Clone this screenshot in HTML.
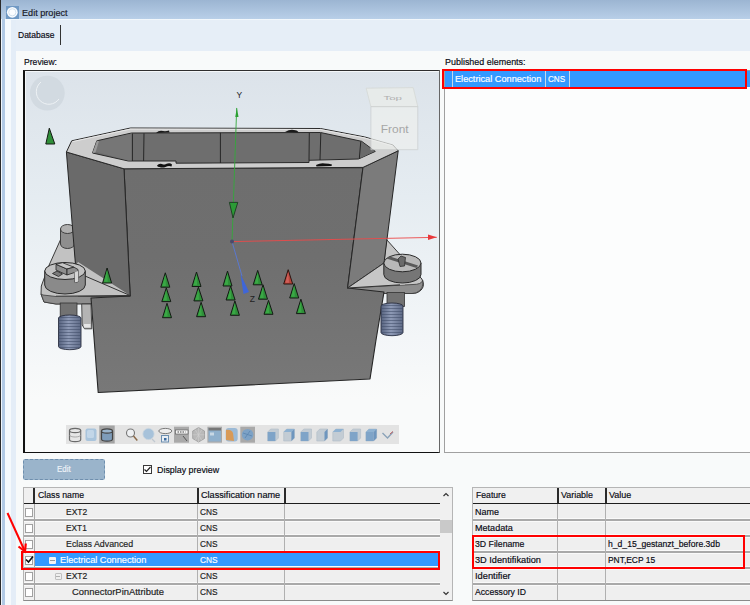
<!DOCTYPE html>
<html><head><meta charset="utf-8">
<style>
*{margin:0;padding:0;box-sizing:border-box}
html,body{width:750px;height:605px;overflow:hidden;background:#f8fafa;font-family:"Liberation Sans",sans-serif;font-size:9.2px;color:#1e1e1e;position:relative}
.a{position:absolute}
.t{position:absolute;white-space:nowrap;line-height:12px;transform-origin:0 0;-webkit-text-stroke:0.18px currentColor}
</style></head><body>
<div class="a" style="left:0px;top:0px;width:750px;height:19px;background:linear-gradient(#9cb5d2,#b8cfe8);"></div>
<div class="a" style="left:0px;top:19px;width:750px;height:1px;background:#f2f7fb;"></div>
<div class="a" style="left:0px;top:20px;width:750px;height:31px;background:#e6eef7;"></div>
<div class="a" style="left:0px;top:51px;width:750px;height:554px;background:#f8fafa;"></div>
<div class="a" style="left:0px;top:0px;width:1px;height:605px;background:#2a2a2a;"></div>
<div class="a" style="left:1px;top:19px;width:1px;height:586px;background:#eef4fa;"></div>
<div class="a" style="left:2px;top:19px;width:3px;height:586px;background:#b1c9e4;"></div>
<div class="a" style="left:5px;top:19px;width:6px;height:586px;background:#f5f9fc;"></div>
<div class="a" style="left:11px;top:20px;width:5px;height:585px;background:#e4edf7;"></div>
<div class="a" style="left:6px;top:6px;width:12.5px;height:12.5px;background:#7099c4"></div>
<svg class="a" style="left:6px;top:6px" width="13" height="13"><circle cx="6.3" cy="6.3" r="5.4" fill="#fbfdff"/><circle cx="6.3" cy="6.3" r="3.6" fill="none" stroke="#cfdfec" stroke-width="0.9"/></svg>
<div class="t" style="left:22px;top:6.97px;font-size:9.6px;color:#1a1a28;transform:scaleX(0.9496);">Edit project</div>
<div class="t" style="left:17.5px;top:28.97px;font-size:9.6px;color:#0a0a14;transform:scaleX(0.8858);">Database</div>
<div class="a" style="left:60px;top:25px;width:1px;height:20px;background:#333;"></div>
<div class="t" style="left:23.5px;top:55.67px;font-size:9.6px;color:#0a0a14;transform:scaleX(0.8965);">Preview:</div>
<div class="t" style="left:444.7px;top:55.67px;font-size:9.6px;color:#0a0a14;transform:scaleX(0.9324);">Published elements:</div>
<div class="a" style="left:23px;top:70px;width:417px;height:383px;border-top:1px solid #2e2e2e;border-left:2px solid #111;border-right:2px solid #666;border-bottom:1px solid #111;background:#fff;box-shadow:inset -1px 0 0 #333"></div>
<svg class="a" style="left:0;top:0" width="750" height="605" viewBox="0 0 750 605">
<defs><clipPath id="pc"><rect x="25" y="71" width="414" height="381"/></clipPath><linearGradient id="bg" x1="0" y1="0" x2="0" y2="1"><stop offset="0" stop-color="#dce3ea"/><stop offset="0.33" stop-color="#e5ecf1"/><stop offset="0.7" stop-color="#f3f6f8"/><stop offset="0.86" stop-color="#f9fafa"/><stop offset="1" stop-color="#f9fafa"/></linearGradient><linearGradient id="thr" x1="0" y1="0" x2="1" y2="0"><stop offset="0" stop-color="#56627e"/><stop offset="0.45" stop-color="#8e9ab6"/><stop offset="1" stop-color="#5e6a86"/></linearGradient><pattern id="th" width="4" height="3" patternUnits="userSpaceOnUse"><rect width="4" height="3" fill="none"/><rect y="2" width="4" height="1" fill="#3e4a66" opacity="0.55"/></pattern><linearGradient id="ff" x1="0" y1="0" x2="0" y2="1"><stop offset="0" stop-color="#6e6e6e"/><stop offset="0.4" stop-color="#6f6f6f"/><stop offset="1" stop-color="#787878"/></linearGradient></defs>
<g clip-path="url(#pc)">
<rect x="25" y="71" width="414" height="381" fill="url(#bg)"/><rect x="25" y="71" width="414" height="1" fill="#f4f7f9"/><rect x="25" y="71" width="1" height="381" fill="#f4f7f9"/>
<circle cx="47.3" cy="93.1" r="17.4" fill="#d2dae1"/>
<path d="M 41 82 A 12.5 12.5 0 1 0 59 99" stroke="#eef2f5" stroke-width="1" fill="none"/>
<polygon points="49.3,128.2 45.8,144 54.8,144" fill="#2f8f39" stroke="#141a14" stroke-width="1" stroke-linejoin="round" />
<polygon points="366.2,88.2 413.2,87.6 417.8,106.7 370.9,106.7" fill="#e9ecea" stroke="#d4d8d4" stroke-width="0.8" stroke-linejoin="round" opacity="0.9"/>
<text x="392.7" y="100" font-family="Liberation Sans" font-size="8" fill="#b0b0b0" text-anchor="middle" textLength="18.6" lengthAdjust="spacingAndGlyphs" transform="translate(392.7 99.5) scale(1 0.6) translate(-392.7 -99.5)">Top</text>
<polygon points="60.7,239.3 74,236 78,296 130.2,295.5 131,303.5 56,304 44,302 41,294 41.3,286 48.7,266" fill="#c2c2c2" stroke="#3a3a3a" stroke-width="1" stroke-linejoin="round" />
<polygon points="56,296.5 130.2,295.5 131,303.5 56,304 44,302 41,294 43,295" fill="#8e8e8e" stroke="#3a3a3a" stroke-width="0.8" stroke-linejoin="round" />
<path d="M60.5 229 L60.5 244 A7 4.5 0 0 0 74.5 244 L74.5 229 Z" fill="#8e8e8e" stroke="#333" stroke-width="0.9"/>
<ellipse cx="67.5" cy="229" rx="7" ry="4.5" fill="#b0b0b0" stroke="#333" stroke-width="0.9"/>
<path d="M386.5 239.5 L384 263 L347.6 288 L349 293.5 L412 293.5 A11 9 0 0 0 423 282 L421.9 279 Z" fill="#c6c6c6" stroke="#3a3a3a" stroke-width="1"/>
<path d="M347.6 288 L413 284.5 A10 5 0 0 0 422.8 280.5 L422.8 284 A11 9.5 0 0 1 412 293.5 L349 293.5 Z" fill="#8e8e8e" stroke="#3a3a3a" stroke-width="0.8"/>
<polygon points="124,168.8 363,167.4 347.6,288 384,292 376,340 370,379 98.2,392.5 91,298 130.2,296" fill="url(#ff)" stroke="#262626" stroke-width="1.1" stroke-linejoin="round" />
<polygon points="66.4,152 124,168.8 130.2,296 78,296" fill="#6a6a6a" stroke="#262626" stroke-width="1" stroke-linejoin="round" />
<polygon points="363,167.4 398.2,150.8 384,263 347.6,288" fill="#7b7b7b" stroke="#262626" stroke-width="1" stroke-linejoin="round" />
<polygon points="78,262 130.2,295.5 56,296.5" fill="#c2c2c2" />
<line x1="85" y1="276" x2="130.2" y2="295.5" stroke="#333" stroke-width="1" />
<line x1="56" y1="296.2" x2="130.2" y2="295.5" stroke="#333" stroke-width="1" />
<polygon points="384,263 347.6,288 405,284.5 405,262" fill="#c6c6c6" />
<line x1="384" y1="263" x2="347.6" y2="288" stroke="#333" stroke-width="1" />
<line x1="347.6" y1="288" x2="400" y2="284.8" stroke="#333" stroke-width="1" />
<polygon points="66.4,152 71.7,140.8 130.4,128 320.5,128.5 364.5,136.9 393,145 398.2,150.8 363,167.4 124,168.8" fill="#cdcdcd" stroke="#2a2a2a" stroke-width="1" stroke-linejoin="round" />
<polyline points="72.5,141.6 130.6,129 320.3,129.5 364.2,137.8 392.5,145.8" fill="none" stroke="#ececec" stroke-width="0.9"/>
<polygon points="92.5,153 96.8,140.8 131.5,133 320.5,132.5 361.6,141.3 375.3,151.4 358.5,159 309,160.3 309,162.5 176,163.2 176,161 128.3,161" fill="#6e6e6e" stroke="#2a2a2a" stroke-width="1" stroke-linejoin="round" />
<polygon points="95.5,151.5 97.8,141.5 131.8,133.6 131.8,160.6 128.3,160.5" fill="#767676" />
<polygon points="361.6,142 374.5,151.3 360.5,158" fill="#6a6a6a" />
<polygon points="92.5,153 96.8,140.8 99,141 95.5,152.6" fill="#9a9a9a" />
<line x1="132.4" y1="133.5" x2="132.4" y2="161" stroke="#262626" stroke-width="1" />
<line x1="144" y1="133.3" x2="143.6" y2="161" stroke="#262626" stroke-width="1" />
<line x1="220.4" y1="132.8" x2="220.4" y2="163" stroke="#262626" stroke-width="1" />
<line x1="309.3" y1="133" x2="309" y2="160.3" stroke="#262626" stroke-width="1" />
<line x1="320.8" y1="133" x2="320" y2="160" stroke="#262626" stroke-width="1" />
<line x1="360.8" y1="141.5" x2="359.3" y2="158.6" stroke="#262626" stroke-width="1" />
<path d="M157 165.5 q2 -2.5 5 -1.5 q2 1 4 0 q4 -1.5 6 0.5 l-0.5 2 q-3 -1 -6 0.5 q-3 1 -6 0 q-2 0 -2.5 -1.5z" fill="#111"/>
<path d="M316 165 q5 -2.5 9 -1.5 q4 0 7 1 l-0.5 1.5 l-15 0.5 z" fill="#111"/>
<path d="M156 133 q3 -3 7 -2 q3 0.5 6 -0.5 l0.5 2 z" fill="#1a1a1a"/>
<path d="M285 132 q5 -3 9 -2 q3 0 4 1.5 l0.5 1 z" fill="#1a1a1a"/>
<path d="M44.7 271 L44.7 285 A20.3 9 0 0 0 85.3 285 L85.3 271 Z" fill="#8a8a8a" stroke="#2a2a2a" stroke-width="1"/>
<ellipse cx="65" cy="271" rx="20.3" ry="8.5" fill="#c2c2c2" stroke="#2a2a2a" stroke-width="1"/>
<polygon points="52.5,273.5 57,271 62.5,274 58.5,276.5" fill="#7a7a7a" stroke="#222" stroke-width="0.8" stroke-linejoin="round" />
<polygon points="56,264.3 56,270 67,275 67,269" fill="#8e8e8e" stroke="#222" stroke-width="0.8" stroke-linejoin="round" />
<polygon points="56,264.3 62.5,262.7 74,267.2 67,269" fill="#c6c6c6" stroke="#222" stroke-width="0.8" stroke-linejoin="round" />
<polygon points="67,269 74,267.2 78,269.5 78.5,281.5 75,282.5 74.5,272.5 67,275" fill="#8e8e8e" stroke="#222" stroke-width="0.8" stroke-linejoin="round" />
<polygon points="74.5,272.5 78,271 78.5,281.5 75,282.5" fill="#d6d6d6" />
<rect x="60.2" y="303" width="16.8" height="15" fill="#727272" stroke="#333" stroke-width="0.8"/>
<path d="M58.5 318 a11.25 3 0 0 1 22.5 0 v28.5 a11.25 3.2 0 0 1 -22.5 0 z" fill="url(#thr)" stroke="#2a2f40" stroke-width="0.9"/>
<path d="M58.5 318 a11.25 3 0 0 1 22.5 0 v28.5 a11.25 3.2 0 0 1 -22.5 0 z" fill="url(#th)"/>
<path d="M81.7 304 L91 304 L91.8 328.8 L84.5 328.8 L82.2 325 Z" fill="#b4b4b4" stroke="#3a3a3a" stroke-width="0.9"/>
<rect x="84" y="324" width="6.5" height="3.5" fill="#e6e6e6"/>
<path d="M383.8 263 L383.8 274.5 A18.6 8.5 0 0 0 421 274.5 L421 263 Z" fill="#767676" stroke="#2a2a2a" stroke-width="1"/>
<ellipse cx="402.4" cy="263" rx="18.6" ry="8.8" fill="#b9b9b9" stroke="#2a2a2a" stroke-width="1"/>
<polygon points="386.5,258.5 390,256.5 418,265.5 416.5,268" fill="#5a5a5a" />
<polygon points="398,259 401,256 405.5,257.5 404.5,266 400,266.5" fill="#6a6a6a" stroke="#222" stroke-width="0.7" stroke-linejoin="round" />
<rect x="387" y="292.5" width="17.5" height="14" fill="#727272" stroke="#333" stroke-width="0.8"/>
<path d="M381 306 a11 3 0 0 1 22 0 v26.5 a11 3.2 0 0 1 -22 0 z" fill="url(#thr)" stroke="#2a2f40" stroke-width="0.9"/>
<path d="M381 306 a11 3 0 0 1 22 0 v26.5 a11 3.2 0 0 1 -22 0 z" fill="url(#th)"/>
<polygon points="107.1,268 102.6,283 111.6,283" fill="#2f8f39" stroke="#141a14" stroke-width="1" stroke-linejoin="round" />
<polygon points="107.1,270 104.1,281.8 107.7,281.8" fill="#3aa845" />
<polygon points="165.29999999999998,272.8 160.79999999999998,287.2 169.79999999999998,287.2" fill="#2f8f39" stroke="#141a14" stroke-width="1" stroke-linejoin="round" />
<polygon points="165.29999999999998,274.8 162.29999999999998,286.0 165.89999999999998,286.0" fill="#3aa845" />
<polygon points="166.29999999999998,287.9 161.79999999999998,301.6 170.79999999999998,301.6" fill="#2f8f39" stroke="#141a14" stroke-width="1" stroke-linejoin="round" />
<polygon points="166.29999999999998,289.9 163.29999999999998,300.40000000000003 166.89999999999998,300.40000000000003" fill="#3aa845" />
<polygon points="167.0,303.3 162.5,317.7 171.5,317.7" fill="#2f8f39" stroke="#141a14" stroke-width="1" stroke-linejoin="round" />
<polygon points="167.0,305.3 164.0,316.5 167.6,316.5" fill="#3aa845" />
<polygon points="196.5,272 192.0,286.5 201.0,286.5" fill="#2f8f39" stroke="#141a14" stroke-width="1" stroke-linejoin="round" />
<polygon points="196.5,274 193.5,285.3 197.1,285.3" fill="#3aa845" />
<polygon points="198.4,287.2 193.9,300.9 202.9,300.9" fill="#2f8f39" stroke="#141a14" stroke-width="1" stroke-linejoin="round" />
<polygon points="198.4,289.2 195.4,299.7 199.0,299.7" fill="#3aa845" />
<polygon points="201.1,302.3 196.6,316.7 205.6,316.7" fill="#2f8f39" stroke="#141a14" stroke-width="1" stroke-linejoin="round" />
<polygon points="201.1,304.3 198.1,315.5 201.7,315.5" fill="#3aa845" />
<polygon points="227.5,271.1 223.0,286 232.0,286" fill="#2f8f39" stroke="#141a14" stroke-width="1" stroke-linejoin="round" />
<polygon points="227.5,273.1 224.5,284.8 228.1,284.8" fill="#3aa845" />
<polygon points="230.6,286 226.1,300 235.1,300" fill="#2f8f39" stroke="#141a14" stroke-width="1" stroke-linejoin="round" />
<polygon points="230.6,288 227.6,298.8 231.2,298.8" fill="#3aa845" />
<polygon points="234.9,300.9 230.4,315.3 239.4,315.3" fill="#2f8f39" stroke="#141a14" stroke-width="1" stroke-linejoin="round" />
<polygon points="234.9,302.9 231.9,314.1 235.5,314.1" fill="#3aa845" />
<polygon points="257.70000000000005,270.4 253.20000000000002,284.8 262.20000000000005,284.8" fill="#2f8f39" stroke="#141a14" stroke-width="1" stroke-linejoin="round" />
<polygon points="257.70000000000005,272.4 254.70000000000002,283.6 258.3,283.6" fill="#3aa845" />
<polygon points="263.0,284.8 258.5,299.2 267.5,299.2" fill="#2f8f39" stroke="#141a14" stroke-width="1" stroke-linejoin="round" />
<polygon points="263.0,286.8 260.0,298.0 263.59999999999997,298.0" fill="#3aa845" />
<polygon points="268.5,300.4 264.0,314.3 273.0,314.3" fill="#2f8f39" stroke="#141a14" stroke-width="1" stroke-linejoin="round" />
<polygon points="268.5,302.4 265.5,313.1 269.09999999999997,313.1" fill="#3aa845" />
<polygon points="294.20000000000005,283.6 289.70000000000005,298 298.70000000000005,298" fill="#2f8f39" stroke="#141a14" stroke-width="1" stroke-linejoin="round" />
<polygon points="294.20000000000005,285.6 291.20000000000005,296.8 294.8,296.8" fill="#3aa845" />
<polygon points="300.90000000000003,299.2 296.40000000000003,313.6 305.40000000000003,313.6" fill="#2f8f39" stroke="#141a14" stroke-width="1" stroke-linejoin="round" />
<polygon points="300.90000000000003,301.2 297.90000000000003,312.40000000000003 301.5,312.40000000000003" fill="#3aa845" />
<polygon points="288.2,269.7 283.7,284 292.7,284" fill="#b8443a" stroke="#2a1410" stroke-width="1" stroke-linejoin="round" />
<polygon points="288.2,272 285.5,282.8 289,282.8" fill="#d0605a" />
<line x1="232" y1="241.6" x2="436.8" y2="237.3" stroke="#ec4a4a" stroke-width="0.9" />
<polygon points="436.8,237.3 428,234.5 428,240" fill="#e8383b" />
<line x1="232" y1="241.6" x2="236.7" y2="108" stroke="#33a83b" stroke-width="0.9" />
<polygon points="236.9,107.5 235.3,117 238.5,117" fill="#2aa032" />
<polygon points="229.4,202.4 237.8,202.4 233,218" fill="#2c9a36" stroke="#1b3a20" stroke-width="0.9" stroke-linejoin="round" />
<line x1="232" y1="241.6" x2="242" y2="276" stroke="#5a78d0" stroke-width="1" />
<polygon points="240.5,274 243.5,294 249,292" fill="#3f66d8" />
<circle cx="232" cy="241.6" r="2" fill="#4a4a6a"/>
<text x="236.5" y="97.5" font-family="Liberation Sans" font-size="8.5" fill="#222">Y</text>
<text x="249.8" y="301.5" font-family="Liberation Sans" font-size="8.5" fill="#222">Z</text>
<polygon points="370.9,106.7 417.8,106.7 417.8,149.7 370.9,149.7" fill="#eef0ee" stroke="#c8cccc" stroke-width="0.9" stroke-linejoin="round" opacity="0.72"/>
<text x="380.8" y="133.4" font-family="Liberation Sans" font-size="10.4" fill="#a6a6a6" textLength="27.8" lengthAdjust="spacingAndGlyphs">Front</text>
<rect x="66" y="425" width="333" height="19" fill="#e3e3e3"/>
<path d="M69.5 430.5 v9 a5.6 2.2 0 0 0 11.2 0 v-9" fill="#e6e6e6" stroke="#6a6a6a" stroke-width="1.2"/>
<ellipse cx="75.1" cy="430.5" rx="5.6" ry="2.2" fill="#e6e6e6" stroke="#6a6a6a" stroke-width="1.2"/>
<path d="M69.5 435 a5.6 2 0 0 0 11.2 0" fill="none" stroke="#9a9a9a" stroke-width="0.8"/>
<rect x="85.5" y="428.5" width="11" height="12.5" rx="2" fill="#a9c4dc"/>
<rect x="87" y="430" width="7" height="8" rx="1.5" fill="#c2d6e8"/>
<rect x="99.3" y="425.5" width="15.400000000000006" height="18.0" fill="#a3a3a3"/>
<path d="M101.5 431 v8 a5.5 2.2 0 0 0 11 0 v-8" fill="#7e9cba" stroke="#444" stroke-width="1.2"/>
<ellipse cx="107" cy="431" rx="5.5" ry="2.2" fill="#9ab4cc" stroke="#444" stroke-width="1.2"/>
<circle cx="130.5" cy="433" r="4" fill="#eef0f2" stroke="#777" stroke-width="1.1"/>
<line x1="133.5" y1="436" x2="137.3" y2="440.5" stroke="#8a6a4a" stroke-width="1.5"/>
<circle cx="148.5" cy="434" r="5.6" fill="#a7c2da" stroke="#c8d4de" stroke-width="0.8"/>
<path d="M152 439 l3 3" stroke="#c0c8d0" stroke-width="1.2"/>
<ellipse cx="165.3" cy="431" rx="6.5" ry="2.6" fill="#eeeeee" stroke="#7a7a7a" stroke-width="1"/>
<rect x="161.5" y="435.5" width="7" height="6.5" fill="#e8eef4" stroke="#6d8fb0" stroke-width="1"/>
<rect x="164" y="438" width="2.5" height="2.5" fill="#3a6aa0"/>
<rect x="174" y="426.7" width="15" height="16.0" fill="#a9a9a9"/>
<rect x="175.5" y="430" width="12.5" height="4" fill="#f4f4f4" stroke="#555" stroke-width="0.6"/>
<path d="M177.5 432 h8" stroke="#444" stroke-width="1.2" stroke-dasharray="1.5 1"/>
<line x1="183" y1="436" x2="187" y2="441" stroke="#555" stroke-width="1"/>
<polygon points="198.6,427.5 204.5,431 204.5,438.5 198.6,442 192.7,438.5 192.7,431" fill="#b9b9b9" stroke="#9a9a9a" stroke-width="0.8"/>
<path d="M192.7 434.8 h11.8 M198.6 427.5 v14.5 M195 429.5 l7 11 M202 429.5 l-7 11" stroke="#d4d4d4" stroke-width="0.5"/>
<rect x="207.4" y="426.7" width="14.599999999999994" height="16.0" fill="#a9a9a9"/>
<rect x="208.5" y="428" width="12.5" height="13.5" fill="#8fb0cc"/>
<rect x="208.5" y="428" width="12.5" height="2.5" fill="#777"/>
<rect x="210" y="432.5" width="4" height="3" fill="#c8d8e4"/>
<rect x="225.7" y="428" width="12" height="13.5" rx="3" fill="#9cbad6"/>
<path d="M226 430 q5 -1 7 3 l1 8 l-8 -1 z" fill="#d89a58"/>
<rect x="240.3" y="426.7" width="14.699999999999989" height="16.0" fill="#a9a9a9"/>
<circle cx="247.6" cy="434.7" r="5.8" fill="#7da2c6"/>
<path d="M243 433 l9 3 M245 438 l5 -7" stroke="#5a84ae" stroke-width="0.8"/>
<polygon points="270.7,429 278.4,429 278.4,438 275.4,441 267.7,441 267.7,432" fill="#c3ccd4" stroke="#b0bcc8" stroke-width="0.6"/>
<polygon points="267.7,432 275.4,432 275.4,441 267.7,441" fill="#7fa4c8"/>
<polygon points="286.7,429 294.4,429 294.4,438 291.4,441 283.7,441 283.7,432" fill="#c3ccd4" stroke="#b0bcc8" stroke-width="0.6"/>
<polygon points="286.7,429 294.4,429 291.4,432 283.7,432" fill="#8fb2d2"/>
<polygon points="291.4,432 294.4,429 294.4,438 291.4,441" fill="#6f96be"/>
<polygon points="303.8,429 311.5,429 311.5,438 308.5,441 300.8,441 300.8,432" fill="#c3ccd4" stroke="#b0bcc8" stroke-width="0.6"/>
<polygon points="300.8,432 308.5,432 308.5,441 300.8,441" fill="#7fa4c8"/>
<polygon points="319.8,429 327.5,429 327.5,438 324.5,441 316.8,441 316.8,432" fill="#c3ccd4" stroke="#b0bcc8" stroke-width="0.6"/>
<polygon points="324.5,432 327.5,429 327.5,438 324.5,441" fill="#6f96be"/>
<polygon points="335.8,429 343.5,429 343.5,438 340.5,441 332.8,441 332.8,432" fill="#c3ccd4" stroke="#b0bcc8" stroke-width="0.6"/>
<polygon points="335.8,429 343.5,429 340.5,432 332.8,432" fill="#8fb2d2"/>
<polygon points="352.9,429 360.59999999999997,429 360.59999999999997,438 357.59999999999997,441 349.9,441 349.9,432" fill="#c3ccd4" stroke="#b0bcc8" stroke-width="0.6"/>
<polygon points="349.9,432 357.59999999999997,432 357.59999999999997,441 349.9,441" fill="#7fa4c8"/>
<polygon points="368.9,429 376.59999999999997,429 376.59999999999997,438 373.59999999999997,441 365.9,441 365.9,432" fill="#c3ccd4" stroke="#b0bcc8" stroke-width="0.6"/>
<polygon points="365.9,432 373.59999999999997,432 373.59999999999997,441 365.9,441" fill="#7fa4c8"/>
<polygon points="368.9,429 376.59999999999997,429 373.59999999999997,432 365.9,432" fill="#8fb2d2"/>
<polygon points="373.59999999999997,432 376.59999999999997,429 376.59999999999997,438 373.59999999999997,441" fill="#6f96be"/>
<path d="M382.5 433 l5 5 l5.5 -6" fill="none" stroke="#8aa2b8" stroke-width="1.4"/>
<path d="M390 434 l3 -2.5" stroke="#c06060" stroke-width="1"/>
</g></svg>
<div class="a" style="left:444px;top:70px;width:306px;height:383px;border-left:1px solid #a0a0a0;border-top:1px solid #a0a0a0;border-bottom:1px solid #a0a0a0;background:#fcfdfd"></div>
<div class="a" style="left:445px;top:71px;width:305px;height:16px;background:#3399ff;"></div>
<div class="a" style="left:452px;top:71px;width:1px;height:16px;background:#c4d8ec;"></div>
<div class="a" style="left:545px;top:71px;width:1px;height:16px;background:#c4d8ec;"></div>
<div class="a" style="left:569px;top:71px;width:1px;height:16px;background:#c4d8ec;"></div>
<div class="t" style="left:455px;top:72.67px;font-size:9.6px;color:#fff;transform:scaleX(0.9570);">Electrical Connection</div>
<div class="t" style="left:547.7px;top:72.67px;font-size:9.6px;color:#fff;transform:scaleX(0.8436);">CNS</div>
<div class="a" style="left:442px;top:69px;width:305px;height:20px;border:2px solid #f00"></div>
<div class="a" style="left:23px;top:459px;width:82px;height:21px;background:#9ab4cb;border:1px dashed #6f8fae;border-radius:2px"></div>
<div class="t" style="left:57.2px;top:463.37px;font-size:9.6px;color:#eef3f8;transform:scaleX(0.8282);">Edit</div>
<div class="a" style="left:143px;top:465px;width:9px;height:9px;border:1px solid #3a3a3a;background:#fff"></div>
<svg class="a" style="left:143px;top:465px" width="9" height="9"><path d="M1.5 4.5 L3.5 6.5 L7.5 2" stroke="#222" stroke-width="1.2" fill="none"/></svg>
<div class="t" style="left:157px;top:463.67px;font-size:9.6px;color:#0a0a14;transform:scaleX(0.9253);">Display preview</div>
<div class="a" style="left:23px;top:487px;width:430px;height:114px;border:1px solid #b5b5b5;border-bottom-color:#8a8a8a;background:#efefef"></div>
<div class="a" style="left:24px;top:488px;width:416px;height:15px;background:#f0f0f0;"></div>
<div class="a" style="left:440px;top:488px;width:12px;height:112px;background:#f0f0f0;"></div>
<div class="a" style="left:24px;top:503px;width:416px;height:1px;background:#1e1e1e;"></div>
<div class="a" style="left:33px;top:488px;width:2px;height:15px;background:#2a2a2a;"></div>
<div class="a" style="left:34px;top:504px;width:1px;height:96px;background:#b0b0b0;"></div>
<div class="a" style="left:197px;top:488px;width:2px;height:15px;background:#2a2a2a;"></div>
<div class="a" style="left:197px;top:504px;width:1px;height:96px;background:#b0b0b0;"></div>
<div class="a" style="left:284px;top:488px;width:2px;height:15px;background:#2a2a2a;"></div>
<div class="a" style="left:284px;top:504px;width:1px;height:96px;background:#b0b0b0;"></div>
<div class="t" style="left:37.7px;top:488.67px;font-size:9.6px;color:#0a0a14;transform:scaleX(0.9076);">Class name</div>
<div class="t" style="left:200.7px;top:488.67px;font-size:9.6px;color:#0a0a14;transform:scaleX(0.9516);">Classification name</div>
<div class="a" style="left:25px;top:508px;width:8px;height:9px;border:1px solid #a0a0a0;background:#fff"></div>
<div class="t" style="left:65.7px;top:505.67px;font-size:9.6px;color:#1e1e1e;transform:scaleX(0.8872);">EXT2</div>
<div class="t" style="left:199.9px;top:505.67px;font-size:9.6px;color:#1e1e1e;transform:scaleX(0.8683);">CNS</div>
<div class="a" style="left:24px;top:518px;width:416px;height:1px;background:#fafafa;"></div>
<div class="a" style="left:24px;top:519px;width:416px;height:2px;background:#a9a9a9;"></div>
<div class="a" style="left:24px;top:521px;width:416px;height:1px;background:#fafafa;"></div>
<div class="a" style="left:25px;top:524px;width:8px;height:9px;border:1px solid #a0a0a0;background:#fff"></div>
<div class="t" style="left:65.7px;top:521.67px;font-size:9.6px;color:#1e1e1e;transform:scaleX(0.8663);">EXT1</div>
<div class="t" style="left:199.9px;top:521.67px;font-size:9.6px;color:#1e1e1e;transform:scaleX(0.8683);">CNS</div>
<div class="a" style="left:24px;top:534px;width:416px;height:1px;background:#fafafa;"></div>
<div class="a" style="left:24px;top:535px;width:416px;height:2px;background:#a9a9a9;"></div>
<div class="a" style="left:24px;top:537px;width:416px;height:1px;background:#fafafa;"></div>
<div class="a" style="left:25px;top:540px;width:8px;height:9px;border:1px solid #a0a0a0;background:#fff"></div>
<div class="t" style="left:65.7px;top:537.67px;font-size:9.6px;color:#1e1e1e;transform:scaleX(0.9192);">Eclass Advanced</div>
<div class="t" style="left:199.9px;top:537.67px;font-size:9.6px;color:#1e1e1e;transform:scaleX(0.8683);">CNS</div>
<div class="a" style="left:24px;top:550px;width:416px;height:1px;background:#fafafa;"></div>
<div class="a" style="left:24px;top:551px;width:416px;height:2px;background:#a9a9a9;"></div>
<div class="a" style="left:24px;top:553px;width:416px;height:1px;background:#fafafa;"></div>
<div class="a" style="left:25px;top:556px;width:8px;height:9px;border:1px solid #a0a0a0;background:#fff"></div>
<div class="a" style="left:35px;top:553px;width:404px;height:15px;background:#3399ff;"></div>
<div class="a" style="left:49px;top:557px;width:7px;height:7px;background:#f4f4f4;border-radius:1px"></div>
<div class="a" style="left:50px;top:560px;width:5px;height:1px;background:#9a9a9a;"></div>
<svg class="a" style="left:25px;top:555px" width="9" height="9"><path d="M1 4.5 L3.5 7 L8 1.5" stroke="#111" stroke-width="1.6" fill="none"/></svg>
<div class="t" style="left:59.8px;top:553.67px;font-size:9.6px;color:#fff;transform:scaleX(0.9581);">Electrical Connection</div>
<div class="t" style="left:199.9px;top:553.67px;font-size:9.6px;color:#fff;transform:scaleX(0.8683);">CNS</div>
<div class="a" style="left:24px;top:566px;width:416px;height:1px;background:#fafafa;"></div>
<div class="a" style="left:24px;top:567px;width:416px;height:2px;background:#a9a9a9;"></div>
<div class="a" style="left:24px;top:569px;width:416px;height:1px;background:#fafafa;"></div>
<div class="a" style="left:25px;top:572px;width:8px;height:9px;border:1px solid #a0a0a0;background:#fff"></div>
<div class="a" style="left:54.5px;top:573px;width:7px;height:7px;border:1px solid #c0c0c0;border-radius:1px"></div>
<div class="a" style="left:56px;top:576px;width:4px;height:1px;background:#b0b0b0;"></div>
<div class="t" style="left:66.4px;top:569.67px;font-size:9.6px;color:#1e1e1e;transform:scaleX(0.8872);">EXT2</div>
<div class="t" style="left:199.9px;top:569.67px;font-size:9.6px;color:#1e1e1e;transform:scaleX(0.8683);">CNS</div>
<div class="a" style="left:24px;top:582px;width:416px;height:1px;background:#fafafa;"></div>
<div class="a" style="left:24px;top:583px;width:416px;height:2px;background:#a9a9a9;"></div>
<div class="a" style="left:24px;top:585px;width:416px;height:1px;background:#fafafa;"></div>
<div class="a" style="left:25px;top:588px;width:8px;height:9px;border:1px solid #a0a0a0;background:#fff"></div>
<div class="t" style="left:72.3px;top:585.67px;font-size:9.6px;color:#1e1e1e;transform:scaleX(0.9796);">ConnectorPinAttribute</div>
<div class="t" style="left:199.9px;top:585.67px;font-size:9.6px;color:#1e1e1e;transform:scaleX(0.8683);">CNS</div>
<div class="a" style="left:34px;top:504px;width:1px;height:96px;background:#a8a8a8;"></div>
<div class="a" style="left:197px;top:504px;width:1px;height:47px;background:#b0b0b0;"></div>
<div class="a" style="left:197px;top:568px;width:1px;height:32px;background:#b0b0b0;"></div>
<div class="a" style="left:284px;top:504px;width:1px;height:47px;background:#b0b0b0;"></div>
<div class="a" style="left:284px;top:568px;width:1px;height:32px;background:#b0b0b0;"></div>
<div class="a" style="left:440px;top:520px;width:12px;height:13px;background:#c9c9c9;"></div>
<svg class="a" style="left:440px;top:488px" width="12" height="112"><path d="M3.5 8 L6 5.5 L8.5 8" stroke="#333" stroke-width="1.2" fill="none"/><path d="M3.5 104 L6 106.5 L8.5 104" stroke="#333" stroke-width="1.2" fill="none"/></svg>
<div class="a" style="left:21px;top:551px;width:419px;height:19px;border:2px solid #f00"></div>
<svg class="a" style="left:0;top:505px" width="40" height="50"><path d="M7.5 8 L24.5 45.5" stroke="#f00" stroke-width="2" fill="none"/><path d="M18.5 41.5 L25 46.5 L25.8 38.5" stroke="#f00" stroke-width="2.2" fill="none" stroke-linejoin="miter"/></svg>
<div class="a" style="left:472px;top:487px;width:280px;height:114px;border:1px solid #b5b5b5;border-bottom-color:#8a8a8a;background:#efefef"></div>
<div class="a" style="left:473px;top:488px;width:277px;height:15px;background:#f0f0f0;"></div>
<div class="a" style="left:473px;top:503px;width:277px;height:1px;background:#1e1e1e;"></div>
<div class="a" style="left:557px;top:488px;width:2px;height:15px;background:#2a2a2a;"></div>
<div class="a" style="left:557px;top:504px;width:1px;height:96px;background:#b0b0b0;"></div>
<div class="a" style="left:605px;top:488px;width:2px;height:15px;background:#2a2a2a;"></div>
<div class="a" style="left:605px;top:504px;width:1px;height:96px;background:#b0b0b0;"></div>
<div class="t" style="left:475.7px;top:488.67px;font-size:9.6px;color:#0a0a14;transform:scaleX(0.9008);">Feature</div>
<div class="t" style="left:561px;top:488.67px;font-size:9.6px;color:#0a0a14;transform:scaleX(0.9273);">Variable</div>
<div class="t" style="left:608.7px;top:488.67px;font-size:9.6px;color:#0a0a14;transform:scaleX(0.9354);">Value</div>
<div class="t" style="left:475.2px;top:505.67px;font-size:9.6px;color:#0a0a14;transform:scaleX(0.9334);">Name</div>
<div class="a" style="left:473px;top:518px;width:277px;height:1px;background:#fafafa;"></div>
<div class="a" style="left:473px;top:519px;width:277px;height:2px;background:#a9a9a9;"></div>
<div class="a" style="left:473px;top:521px;width:277px;height:1px;background:#fafafa;"></div>
<div class="t" style="left:475.2px;top:521.67px;font-size:9.6px;color:#0a0a14;transform:scaleX(0.9445);">Metadata</div>
<div class="a" style="left:473px;top:534px;width:277px;height:1px;background:#fafafa;"></div>
<div class="a" style="left:473px;top:535px;width:277px;height:2px;background:#a9a9a9;"></div>
<div class="a" style="left:473px;top:537px;width:277px;height:1px;background:#fafafa;"></div>
<div class="t" style="left:475.2px;top:537.67px;font-size:9.6px;color:#0a0a14;transform:scaleX(0.9096);">3D Filename</div>
<div class="t" style="left:608.3px;top:537.67px;font-size:9.6px;color:#0a0a14;transform:scaleX(0.8967);">h_d_15_gestanzt_before.3db</div>
<div class="a" style="left:473px;top:550px;width:277px;height:1px;background:#fafafa;"></div>
<div class="a" style="left:473px;top:551px;width:277px;height:2px;background:#a9a9a9;"></div>
<div class="a" style="left:473px;top:553px;width:277px;height:1px;background:#fafafa;"></div>
<div class="t" style="left:475.2px;top:553.67px;font-size:9.6px;color:#0a0a14;transform:scaleX(0.9588);">3D Identifikation</div>
<div class="t" style="left:608.3px;top:553.67px;font-size:9.6px;color:#0a0a14;transform:scaleX(0.8769);">PNT,ECP 15</div>
<div class="a" style="left:473px;top:566px;width:277px;height:1px;background:#fafafa;"></div>
<div class="a" style="left:473px;top:567px;width:277px;height:2px;background:#a9a9a9;"></div>
<div class="a" style="left:473px;top:569px;width:277px;height:1px;background:#fafafa;"></div>
<div class="t" style="left:475.2px;top:569.67px;font-size:9.6px;color:#0a0a14;transform:scaleX(0.9696);">Identifier</div>
<div class="a" style="left:473px;top:582px;width:277px;height:1px;background:#fafafa;"></div>
<div class="a" style="left:473px;top:583px;width:277px;height:2px;background:#a9a9a9;"></div>
<div class="a" style="left:473px;top:585px;width:277px;height:1px;background:#fafafa;"></div>
<div class="t" style="left:475.2px;top:585.67px;font-size:9.6px;color:#0a0a14;transform:scaleX(0.9020);">Accessory ID</div>
<div class="a" style="left:557px;top:504px;width:1px;height:96px;background:#b0b0b0;"></div>
<div class="a" style="left:605px;top:504px;width:1px;height:96px;background:#b0b0b0;"></div>
<div class="a" style="left:472px;top:535px;width:273px;height:34px;border:2px solid #f00"></div>
</body></html>
